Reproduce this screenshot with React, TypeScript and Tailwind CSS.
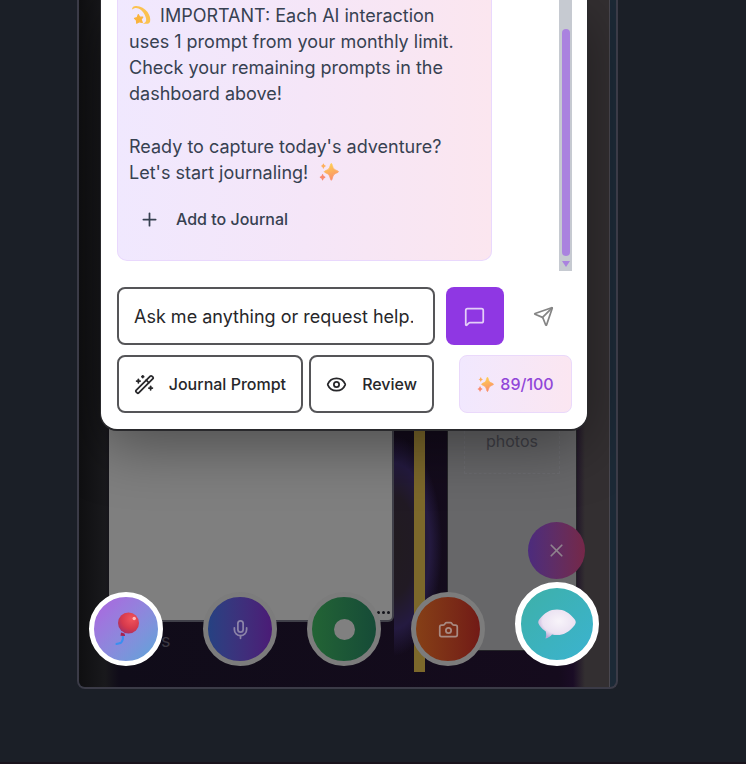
import React from "react";
import { Camera, Eye, MessageSquare, Mic, Plus, Send, WandSparkles, X } from "lucide-react";

function Sparkles({ className }: { className: string }) {
  return (
    <svg viewBox="0 0 20 20" className={className} aria-hidden="true">
      <defs>
        <linearGradient id="spark" x1="0.3" y1="0" x2="0.6" y2="1">
          <stop offset="0" stopColor="#ffd24f" />
          <stop offset="1" stopColor="#fa8a6c" />
        </linearGradient>
      </defs>
      <path
        fill="url(#spark)"
        stroke="url(#spark)"
        strokeWidth="0.8"
        strokeLinejoin="round"
        d="M12.300 1.400c.8 0 1.300 4.200 2.600 5.500 1.300 1.300 4.700 2 4.700 2.800s-3.400 1.600-4.700 2.900c-1.300 1.400-1.800 5.700-2.600 5.700s-1.300-4.300-2.600-5.700C8.400 11.300 5.200 10.500 5.200 9.700s3.200-1.500 4.500-2.800C11 5.600 11.500 1.400 12.300 1.400z"
      />
      <path fill="#fdb05c" d="M4.400 1.500c.6 0 .6 1.200 1 1.600s1.500.6 1.500 1-1.100.6-1.500 1-.4 1.700-1 1.700-.6-1.300-1-1.700-1.300-.6-1.300-1 .9-.6 1.300-1 .4-1.600 1-1.600z" />
      <path fill="#f98b6f" d="M3.600 12c.6 0 .7 1.500 1.200 2s1.700.6 1.700 1.200-1.200.7-1.700 1.200-.6 2.000-1.200 2.000-.7-1.500-1.200-2.000S.7 15.800.7 15.200s1.200-.7 1.700-1.200.6-2 1.200-2z" />
    </svg>
  );
}

function Dizzy({ className }: { className: string }) {
  return (
    <svg viewBox="0 0 20 20" className={className} aria-hidden="true">
      <path
        fill="#fbc250"
        d="M1 4.600C1 2 3 .9 5.200 1c4.500.3 8.800 2.600 11.300 6.100 2.200 3.100 3.200 6.600 2.600 9.300-.4 1.700-1.700 2.300-3.300 2.300h-4.300c3-.8 4-2.500 3.600-5-.7-4.300-3.600-8.300-7.600-10.300C5.500 2.500 2.900 2.700 1 4.600z"
      />
      <path
        fill="#fab43c"
        stroke="#fab43c"
        strokeWidth="1.200"
        strokeLinejoin="round"
        d="M7.300 9.500l1.300 2.500 3.200.2-1.700 2.300 1.200 3-3-.7-2.600 1.400-.2-2.900-2-2 2.800-.8z"
      />
    </svg>
  );
}

function Balloon() {
  return (
    <svg viewBox="0 0 26 36" className="h-9 w-[26px]" aria-hidden="true">
      <defs>
        <radialGradient id="balloon" cx="0.65" cy="0.3" r="0.8">
          <stop offset="0" stopColor="#f2545b" />
          <stop offset="0.6" stopColor="#d5394c" />
          <stop offset="1" stopColor="#a02f6a" />
        </radialGradient>
      </defs>
      <path d="M9.800 24.500c.4 3 .2 5-1.300 6.700-1.300 1.400-3.200 1-5 1.800" fill="none" stroke="#3a8ff0" strokeWidth="2" strokeLinecap="round" />
      <path d="M8 21.500l-.5 3.200 4.600.2-.6-2.400z" fill="#a8204e" />
      <circle cx="15.500" cy="12" r="10.500" fill="url(#balloon)" />
      <circle cx="21.200" cy="7.500" r="1.700" fill="#ffbcbc" />
    </svg>
  );
}

function SpeechBubble() {
  return (
    <svg viewBox="0 0 40 32" className="h-8 w-10" aria-hidden="true">
      <defs>
        <radialGradient id="speech" cx="0.55" cy="0.4" r="0.62">
          <stop offset="0" stopColor="#f8f4fa" />
          <stop offset="0.7" stopColor="#ebe2f2" />
          <stop offset="1" stopColor="#bba9d6" />
        </radialGradient>
      </defs>
      <path
        fill="url(#speech)"
        d="M20 1.500c7 0 12.500 3.200 17.600 9.800 1.600 2.200 1.600 3.700 0 5.900C32.500 23.800 27 27 20 27c-1.800 0-3.400-.2-5-.6-1.800 2-3.800 3.400-6.500 4.100.8-2.200.9-4.600.3-7C6.500 22 4.500 20 2.400 17.200c-1.600-2.200-1.600-3.700 0-5.900C7.500 4.700 13 1.500 20 1.500z"
      />
    </svg>
  );
}

function Page() {
  return (
    <div className="col-start-1 row-start-1 flex min-w-0 bg-[linear-gradient(to_right,#0f0f11_0px,#19191c_26px,#100c19_40px,#150b1d_480px,#1a0c25_494px,#332f31_506px)]">
      <div className="ml-[30px] min-w-0 flex-1 text-[#3c3942]">
        <div className="flex h-[622px] items-end justify-end rounded-br-md border-r-2 border-b-2 border-[#404049] bg-[#7f7f7f] pr-0.5 pb-1">
          <span className="flex gap-0.5 pb-0.5">
            <i className="size-[3px] rounded-full bg-[#15151b]" />
            <i className="size-[3px] rounded-full bg-[#15151b]" />
            <i className="size-[3px] rounded-full bg-[#15151b]" />
          </span>
        </div>
        <p className="mt-[7px] ml-[52px] text-lg leading-6">s</p>
      </div>
      <div className="flex w-[53px] bg-[radial-gradient(ellipse_48px_110px_at_0px_546px,#211b20_0%,#211a24_45%,#241a40_75%,transparent_100%)] pl-5">
        <div className="h-[672px] w-[11px] bg-[#7c682b]" />
      </div>
      <div className="mr-8 h-[651px] w-[130px] border-x border-b border-[#242428] bg-[#676769] px-4 text-center text-base text-[#404047]">
        <p className="border-x border-b border-dashed border-[#6c6c70] pt-[429px] pb-5 leading-6">photos</p>
      </div>
    </div>
  );
}

function Assistant() {
  return (
    <section
      aria-label="Journal assistant"
      className="mx-[22px] rounded-b-2xl bg-white pr-[15px] pb-4 pl-4 shadow-[0_1px_0_1px_#29292c,0_16px_60px_rgba(0,0,0,0.4)]"
    >
      <div className="flex justify-between">
        <article className="mb-2.5 w-[375px] rounded-b-[10px] border-x border-b border-[#e9d8fd] bg-gradient-to-r from-[#f0e8fe] via-[#f5e6f8] to-[#fbe6ef] px-[11px] pt-[3px] pb-4 text-[18px] leading-[26px] text-[#374151]">
          <p>
            <Dizzy className="mr-1 ml-0.5 inline-block size-5 align-[-3px]" /> IMPORTANT: Each AI interaction
            <br />
            uses 1 prompt from your monthly limit.
            <br />
            Check your remaining prompts in the
            <br />
            dashboard above!
          </p>
          <p className="mt-[27px]">
            Ready to capture today's adventure?
            <br />
            Let's start journaling! <Sparkles className="ml-1.5 inline-block size-5 align-[-3px]" />
          </p>
          <button className="mt-[9px] flex h-12 items-center gap-4 px-2.5 text-base font-medium">
            <Plus className="size-[21px]" strokeWidth={2} />
            Add to Journal
          </button>
        </article>
        <div className="flex h-[271px] w-[13px] flex-col items-center bg-[#c6cad1] pt-[29px]">
          <div className="h-[227px] w-2 rounded-full bg-[#aa82df]" />
          <svg viewBox="0 0 8 6" className="mt-[5px] h-1.5 w-2" aria-hidden="true">
            <path d="M0 0h8L4 6z" fill="#aa82df" />
          </svg>
        </div>
      </div>

      <form className="mt-4 flex justify-between" onSubmit={(e) => e.preventDefault()}>
        <input
          aria-label="Message"
          placeholder="Ask me anything or request help..."
          className="h-[58px] w-[318px] rounded-lg border-2 border-[#555558] pr-5 pl-[15px] text-[18px] text-[#27272a] outline-none placeholder:text-[#27272a]"
        />
        <button aria-label="Chat" className="grid size-[58px] place-items-center rounded-lg bg-[#8f37e3] text-[#e4cff8]">
          <MessageSquare className="size-[21px]" strokeWidth={2} />
        </button>
        <button aria-label="Send" className="grid size-[58px] place-items-center text-[#858585]">
          <Send className="size-[21px]" strokeWidth={2} />
        </button>
      </form>

      <div className="mt-2.5 flex gap-1.5 text-base font-medium text-[#27272a]">
        <button className="flex h-[58px] w-[186px] items-center justify-between rounded-lg border-2 border-[#555558] px-[15px]">
          <WandSparkles className="size-[21px]" strokeWidth={2} />
          Journal Prompt
        </button>
        <button className="flex h-[58px] w-[125px] items-center justify-between rounded-lg border-2 border-[#555558] px-[15px]">
          <Eye className="size-[21px]" strokeWidth={2} />
          Review
        </button>
        <p className="ml-auto flex h-[58px] w-[113px] items-center justify-center gap-1.5 rounded-lg border border-[#ead9fb] bg-gradient-to-r from-[#f1e8fe] to-[#fbe6f1] text-[#9146d8]">
          <Sparkles className="size-[17px]" />
          89/100
        </p>
      </div>
    </section>
  );
}

function Dock() {
  return (
    <nav aria-label="Quick actions" className="mx-2.5 mt-[3px] mb-[21px] flex items-end justify-between">
      <button aria-label="Balloon" className="mr-2.5 grid size-[74px] place-items-center rounded-full border-[5px] border-white bg-gradient-to-br from-[#ad62df] to-[#57a5d9]">
        <Balloon />
      </button>
      <button aria-label="Record audio" className="grid size-[74px] place-items-center rounded-full border-[5px] border-[#7c7c7c] bg-gradient-to-r from-[#1f4483] to-[#4c1675] bg-origin-border text-[#8b83a8]">
        <Mic className="size-[21px]" strokeWidth={2} />
      </button>
      <button aria-label="Record" className="grid size-[74px] place-items-center rounded-full border-[5px] border-[#7c7c7c] bg-gradient-to-r from-[#246634] to-[#154937] bg-origin-border">
        <span className="size-[21px] rounded-full bg-[#808080]" />
      </button>
      <button aria-label="Camera" className="grid size-[74px] place-items-center rounded-full border-[5px] border-[#7c7c7c] bg-gradient-to-r from-[#874216] to-[#701616] bg-origin-border text-[#a88a82]">
        <Camera className="size-[21px]" strokeWidth={2} />
      </button>
      <button aria-label="Messages" className="grid size-[84px] place-items-center rounded-full border-[6px] border-white bg-gradient-to-br from-[#3eb0a8] to-[#3bb3d0]">
        <SpeechBubble />
      </button>
    </nav>
  );
}

export default function App() {
  return (
    <main className="min-h-screen overflow-hidden border-b-2 border-[#19131c] bg-[#1b1f27] pr-[128px] pl-[77px] font-['Inter',sans-serif]">
      <div className="flex overflow-hidden rounded-b-lg border-x-2 border-b-2 border-[#3b3b47] bg-[#1c2936]">
        <div className="grid min-w-0 flex-1 grid-cols-1 border-r border-[#4a4850]">
          <Page />
          <div className="relative z-10 col-start-1 row-start-1">
            <Assistant />
            <div className="mt-[93px] flex justify-end pr-6">
              <button aria-label="Close menu" className="grid size-[57px] place-items-center rounded-full bg-gradient-to-r from-[#4c2b7d] to-[#752748] text-[#8f838d]">
                <X className="size-[21px]" strokeWidth={2} />
              </button>
            </div>
            <Dock />
          </div>
        </div>
        <div className="w-1.5" />
      </div>
    </main>
  );
}
